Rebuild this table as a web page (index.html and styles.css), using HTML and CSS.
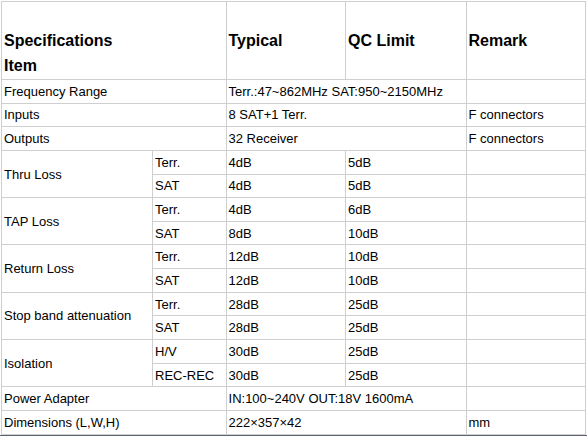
FILE: index.html
```html
<!DOCTYPE html>
<html>
<head>
<meta charset="utf-8">
<link rel="stylesheet" href="styles.css">
</head>
<body>
<div class="wrap">
<table class="spec">
  <colgroup>
    <col class="c1"><col class="c2"><col class="c3"><col class="c4"><col class="c5">
  </colgroup>
  <tr class="head">
    <th colspan="2">Specifications<br>Item</th>
    <th>Typical</th>
    <th>QC Limit</th>
    <th>Remark</th>
  </tr>
  <tr><td colspan="2">Frequency Range</td><td colspan="2">Terr.:47~862MHz SAT:950~2150MHz</td><td></td></tr>
  <tr><td colspan="2">Inputs</td><td colspan="2">8 SAT+1 Terr.</td><td>F connectors</td></tr>
  <tr><td colspan="2">Outputs</td><td colspan="2">32 Receiver</td><td>F connectors</td></tr>
  <tr><td rowspan="2">Thru Loss</td><td>Terr.</td><td>4dB</td><td>5dB</td><td></td></tr>
  <tr><td>SAT</td><td>4dB</td><td>5dB</td><td></td></tr>
  <tr><td rowspan="2">TAP Loss</td><td>Terr.</td><td>4dB</td><td>6dB</td><td></td></tr>
  <tr><td>SAT</td><td>8dB</td><td>10dB</td><td></td></tr>
  <tr><td rowspan="2">Return Loss</td><td>Terr.</td><td>12dB</td><td>10dB</td><td></td></tr>
  <tr><td>SAT</td><td>12dB</td><td>10dB</td><td></td></tr>
  <tr><td rowspan="2">Stop band attenuation</td><td>Terr.</td><td>28dB</td><td>25dB</td><td></td></tr>
  <tr><td>SAT</td><td>28dB</td><td>25dB</td><td></td></tr>
  <tr><td rowspan="2">Isolation</td><td>H/V</td><td>30dB</td><td>25dB</td><td></td></tr>
  <tr><td>REC-REC</td><td>30dB</td><td>25dB</td><td></td></tr>
  <tr><td colspan="2">Power Adapter</td><td colspan="2">IN:100~240V OUT:18V 1600mA</td><td></td></tr>
  <tr><td colspan="2">Dimensions (L,W,H)</td><td colspan="2">222×357×42</td><td>mm</td></tr>
</table>
<div class="bar"></div>
</div>
</body>
</html>
```
FILE: styles.css
```css
html, body {
  margin: 0;
  padding: 0;
  background: #fff;
}
.wrap {
  padding: 1px 0 0 1px;
  width: 586px;
}
.spec {
  border-collapse: collapse;
  table-layout: fixed;
  width: 584px;
  font-family: "Liberation Sans", Arial, sans-serif;
  font-size: 13px;
  color: #000;
}
.c1 { width: 151px; }
.c2 { width: 73.5px; }
.c3 { width: 119.5px; }
.c4 { width: 120.5px; }
.c5 { width: 119.5px; }
.spec th, .spec td {
  border: 1px solid #cfcfcf;
  padding: 0 2px;
  text-align: left;
  vertical-align: middle;
}
.spec td {
  height: 22.65px;
  line-height: 15px;
}
.spec th {
  font-size: 16px;
  font-weight: bold;
  line-height: 25px;
  vertical-align: top;
  padding-top: 26px;
  padding-bottom: 1px;
  height: 50px;
}
.bar {
  height: 3px;
  margin-left: -1px;
  width: 587px;
  background: #5d6470;
}
```
